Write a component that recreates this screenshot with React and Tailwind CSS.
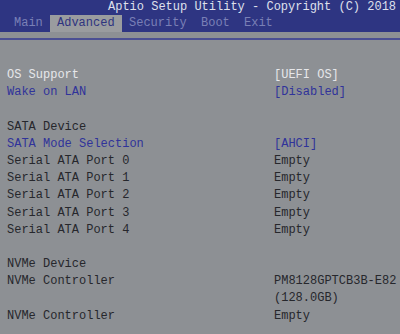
export default function App() {
  const rows = [
    { label: "OS Support", value: "[UEFI OS]", tone: "light" },
    { label: "Wake on LAN", value: "[Disabled]", tone: "blue" },
    { label: "", value: "" },
    { label: "SATA Device", value: "" },
    { label: "SATA Mode Selection", value: "[AHCI]", tone: "blue" },
    { label: "Serial ATA Port 0", value: "Empty" },
    { label: "Serial ATA Port 1", value: "Empty" },
    { label: "Serial ATA Port 2", value: "Empty" },
    { label: "Serial ATA Port 3", value: "Empty" },
    { label: "Serial ATA Port 4", value: "Empty" },
    { label: "", value: "" },
    { label: "NVMe Device", value: "" },
    { label: "NVMe Controller", value: "PM8128GPTCB3B-E82" },
    { label: "", value: "(128.0GB)" },
    { label: "NVMe Controller", value: "Empty" },
  ]

  const toneClass = (tone) => {
    if (tone === "light") return "text-[#e6e7ea]"
    if (tone === "blue") return "text-[#30339a]"
    return "text-[#26272c]"
  }

  return (
    <div className="w-[400px] h-[334px] overflow-hidden bg-[#8d9094] font-['Liberation_Mono',monospace] text-[12px] whitespace-pre">
      {/* blue title band with menu tabs */}
      <div className="h-[32px] bg-[#2e3582] flex flex-col">
        <div className="h-[15px] leading-[15px] pl-[108px] text-[#dfe0ec]">Aptio Setup Utility - Copyright (C) 2018</div>
        <div className="flex h-[17px] leading-[17px] items-end">
          <span className="w-[50px] pl-[14px] text-[#7a80b6]">Main</span>
          <span className="w-[72px] h-[17px] bg-[#9a9c9f] pl-[7px] text-[#2f347f]">Advanced</span>
          <span className="w-[79px] pl-[7px] text-[#7a80b6]">Security</span>
          <span className="w-[43px] text-[#7a80b6]">Boot</span>
          <span className="text-[#7a80b6]">Exit</span>
        </div>
      </div>
      <div className="h-[6px]" />
      <div className="h-[2px] bg-[#4b4f93]" />

      <div className="pt-[27px] pl-[7px]">
        {rows.map((r, i) => (
          <div key={i} className="flex h-[17.2px] leading-[17.2px]">
            <span className={`w-[267px] ${toneClass(r.tone)}`}>{r.label}</span>
            <span className={r.tone ? toneClass(r.tone) : "text-[#26272c]"}>{r.value}</span>
          </div>
        ))}
      </div>
    </div>
  )
}
